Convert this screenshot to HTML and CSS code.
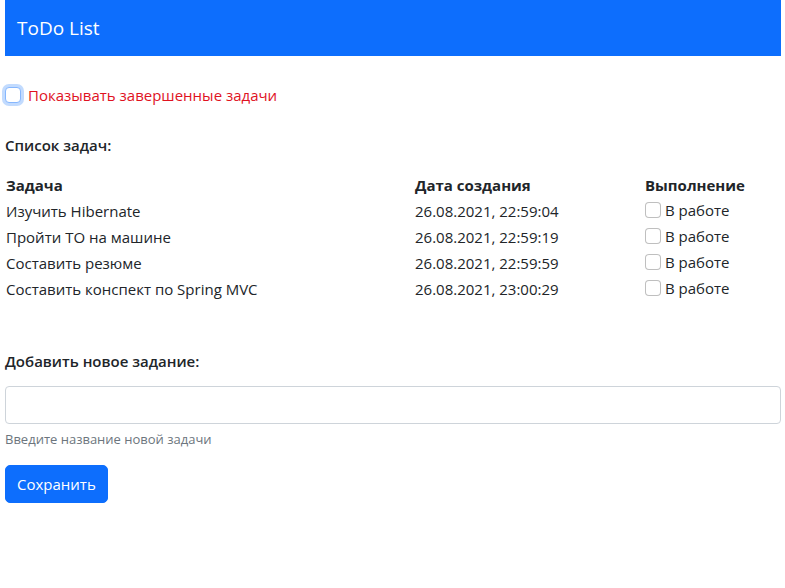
FILE: index.html
```html
<!DOCTYPE html>
<html lang="ru">
<head>
<meta charset="utf-8">
<title>ToDo List</title>
<link rel="stylesheet" href="styles.css">
</head>
<body>
<div class="page">
  <header class="navbar">ToDo List</header>

  <div class="show-done">
    <input type="checkbox" class="check check-focus" id="showDone">
    <label for="showDone" class="show-label">Показывать завершенные задачи</label>
  </div>

  <h6 class="section-title">Список задач:</h6>

  <table class="tasks">
    <thead>
      <tr><th class="col-task">Задача</th><th class="col-date">Дата создания</th><th>Выполнение</th></tr>
    </thead>
    <tbody>
      <tr><td>Изучить Hibernate</td><td>26.08.2021, 22:59:04</td><td><span class="status"><input type="checkbox" class="check"> В работе</span></td></tr>
      <tr><td>Пройти ТО на машине</td><td>26.08.2021, 22:59:19</td><td><span class="status"><input type="checkbox" class="check"> В работе</span></td></tr>
      <tr><td>Составить резюме</td><td>26.08.2021, 22:59:59</td><td><span class="status"><input type="checkbox" class="check"> В работе</span></td></tr>
      <tr><td>Составить конспект по Spring MVC</td><td>26.08.2021, 23:00:29</td><td><span class="status"><input type="checkbox" class="check"> В работе</span></td></tr>
    </tbody>
  </table>

  <form class="add-form">
    <label class="section-title form-label" for="desc">Добавить новое задание:</label>
    <input type="text" id="desc" class="form-control">
    <div class="form-text">Введите название новой задачи</div>
    <button type="button" class="btn">Сохранить</button>
  </form>
</div>
</body>
</html>
```

FILE: styles.css
```css
* { box-sizing: border-box; }
html, body { margin: 0; padding: 0; background: #fff; }
body {
  font-family: "Open Sans", "Noto Sans", sans-serif;
  font-size: 15px;
  line-height: 1.5;
  color: #212529;
}
.page { padding: 0 4px 0 5px; }
.navbar {
  background: #0d6efd;
  color: #fff;
  height: 56px;
  display: flex;
  align-items: center;
  padding-left: 12px;
  font-size: 19px;
}
.show-done {
  display: flex;
  align-items: center;
  gap: 7px;
  margin-top: 28px;
}
.show-label { color: #e0121f; }
.check {
  -webkit-appearance: none;
  appearance: none;
  width: 16px;
  height: 16px;
  margin: 0;
  border: 1px solid rgba(0,0,0,.25);
  border-radius: 4px;
  background: #fff;
  flex: none;
}
.check-focus {
  border-color: #86b7fe;
  box-shadow: 0 0 0 3px rgba(13,110,253,.25);
}
.section-title {
  display: block;
  font-size: 15px;
  font-weight: 600;
  margin: 0;
}
h6.section-title { margin-top: 27px; }
.tasks {
  width: 100%;
  border-collapse: collapse;
  margin-top: 16px;
}
.tasks th, .tasks td {
  text-align: left;
  padding: 0 1px;
  height: 26px;
  vertical-align: middle;
}
.tasks th { font-weight: 700; }
.col-task { width: 409px; }
.col-date { width: 230px; }
.status { display: inline-flex; align-items: center; gap: 4px; }
.add-form { margin-top: 48px; }
.form-label { margin-bottom: 13px; }
.form-control {
  display: block;
  width: 100%;
  height: 38px;
  border: 1px solid #ced4da;
  border-radius: 4px;
  font: inherit;
  padding: 6px 12px;
}
.form-text {
  margin-top: 6px;
  font-size: 13px;
  color: #6c757d;
}
.btn {
  margin-top: 16px;
  background: #0d6efd;
  color: #fff;
  border: 1px solid #0d6efd;
  border-radius: 5px;
  height: 38px;
  padding: 0 11px;
  font: inherit;
}
```
